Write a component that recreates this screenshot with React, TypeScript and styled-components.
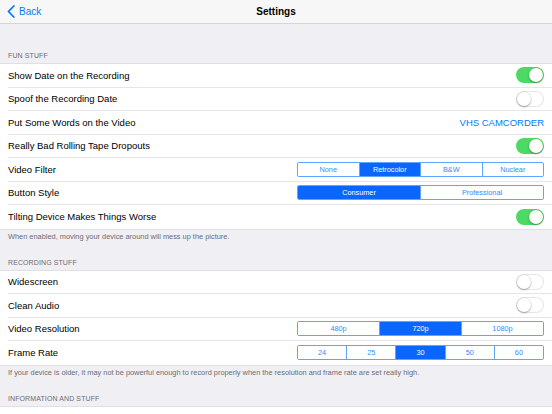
import styled, { createGlobalStyle } from "styled-components";

const GlobalStyle = createGlobalStyle`
  html, body {
    margin: 0;
    padding: 0;
    background: #efeff4;
    font-family: "Liberation Sans", Arial, sans-serif;
    -webkit-font-smoothing: antialiased;
  }
  * { box-sizing: border-box; }
`;

type Row =
  | { label: string; kind: "toggle"; on: boolean }
  | { label: string; kind: "value"; value: string }
  | { label: string; kind: "segments"; options: string[]; selected: number };

const sections: { title: string; footer?: string; rows: Row[] }[] = [
  {
    title: "Fun Stuff",
    footer: "When enabled, moving your device around will mess up the picture.",
    rows: [
      { label: "Show Date on the Recording", kind: "toggle", on: true },
      { label: "Spoof the Recording Date", kind: "toggle", on: false },
      { label: "Put Some Words on the Video", kind: "value", value: "VHS CAMCORDER" },
      { label: "Really Bad Rolling Tape Dropouts", kind: "toggle", on: true },
      { label: "Video Filter", kind: "segments", options: ["None", "Retrocolor", "B&W", "Nuclear"], selected: 1 },
      { label: "Button Style", kind: "segments", options: ["Consumer", "Professional"], selected: 0 },
      { label: "Tilting Device Makes Things Worse", kind: "toggle", on: true },
    ],
  },
  {
    title: "Recording Stuff",
    footer:
      "If your device is older, it may not be powerful enough to record properly when the resolution and frame rate are set really high.",
    rows: [
      { label: "Widescreen", kind: "toggle", on: false },
      { label: "Clean Audio", kind: "toggle", on: false },
      { label: "Video Resolution", kind: "segments", options: ["480p", "720p", "1080p"], selected: 1 },
      { label: "Frame Rate", kind: "segments", options: ["24", "25", "30", "50", "60"], selected: 2 },
    ],
  },
  {
    title: "Information and Stuff",
    rows: [{ label: "", kind: "value", value: "" }],
  },
];

export default function App() {
  return (
    <>
      <GlobalStyle />
      <Page>
        <NavBar>
          <BackButton>
            <svg width="8" height="13" viewBox="0 0 8 13">
              <path d="M6.8 1 1.5 6.5l5.3 5.5" fill="none" stroke="#007aff" strokeWidth="1.8" strokeLinecap="round" strokeLinejoin="round" />
            </svg>
            Back
          </BackButton>
          <NavTitle>Settings</NavTitle>
        </NavBar>

        {sections.map((section) => (
          <Section key={section.title}>
            <SectionHeader>{section.title}</SectionHeader>
            <Group>
              {section.rows.map((row, i) => (
                <Cell key={i}>
                  <Label>{row.label}</Label>
                  {row.kind === "toggle" && (
                    <Toggle $on={row.on}>
                      <Knob $on={row.on} />
                    </Toggle>
                  )}
                  {row.kind === "value" && <Value>{row.value}</Value>}
                  {row.kind === "segments" && (
                    <Segmented>
                      {row.options.map((opt, j) => (
                        <Segment key={opt} $active={j === row.selected}>
                          {opt}
                        </Segment>
                      ))}
                    </Segmented>
                  )}
                </Cell>
              ))}
            </Group>
            {section.footer && <SectionFooter>{section.footer}</SectionFooter>}
          </Section>
        ))}
      </Page>
    </>
  );
}

const Page = styled.div`
  width: 552px;
  height: 414px;
  overflow: hidden;
  background: #efeff4;
`;

const NavBar = styled.div`
  position: relative;
  height: 24px;
  background: #f7f7f7;
  border-bottom: 1px solid #d6d6da;
  display: flex;
  align-items: center;
  justify-content: center;
`;

const BackButton = styled.div`
  position: absolute;
  left: 7px;
  top: 0;
  height: 23px;
  display: flex;
  align-items: center;
  gap: 4px;
  color: #007aff;
  font-size: 10px;
`;

const NavTitle = styled.div`
  font-size: 10px;
  font-weight: 700;
  color: #000;
`;

const Section = styled.section`
  display: flex;
  flex-direction: column;

  &:first-of-type {
    margin-top: 10px;
  }
`;

const SectionHeader = styled.div`
  padding: 18px 8px 3px;
  font-size: 7px;
  line-height: 8px;
  text-transform: uppercase;
  color: #6d6d72;
  letter-spacing: 0.1px;
`;

const Group = styled.div`
  background: #fff;
  border-top: 1px solid #e0e0e4;
  border-bottom: 1px solid #e0e0e4;
`;

const Cell = styled.div`
  height: 23.5px;
  margin-left: 8px;
  padding-right: 8px;
  display: flex;
  align-items: center;
  justify-content: space-between;
  border-bottom: 1px solid #e6e6ea;

  &:last-child {
    border-bottom: none;
  }
`;

const Label = styled.span`
  font-size: 9.5px;
  color: #000;
`;

const Value = styled.span`
  font-size: 9.5px;
  color: #007aff;
`;

const Toggle = styled.div<{ $on: boolean }>`
  position: relative;
  width: 28px;
  height: 16px;
  border-radius: 8px;
  background: ${(p) => (p.$on ? "#4cd964" : "#fff")};
  box-shadow: ${(p) => (p.$on ? "none" : "inset 0 0 0 1px #e5e5ea")};
`;

const Knob = styled.div<{ $on: boolean }>`
  position: absolute;
  top: 1px;
  left: ${(p) => (p.$on ? "13px" : "1px")};
  width: 14px;
  height: 14px;
  border-radius: 50%;
  background: #fff;
  box-shadow: 0 1px 2px rgba(0, 0, 0, 0.3), 0 0 0 0.5px rgba(0, 0, 0, 0.1);
`;

const Segmented = styled.div`
  width: 247px;
  height: 15px;
  display: flex;
  border: 1px solid #5fa5ff;
  border-radius: 2px;
  overflow: hidden;
`;

const Segment = styled.div<{ $active: boolean }>`
  flex: 1;
  display: flex;
  align-items: center;
  justify-content: center;
  font-size: 7.3px;
  color: ${(p) => (p.$active ? "#fff" : "#2f8cff")};
  background: ${(p) => (p.$active ? "#0a66ff" : "#fff")};
  border-left: 1px solid #5fa5ff;

  &:first-child {
    border-left: none;
  }
`;

const SectionFooter = styled.div`
  padding: 2px 8px 0;
  font-size: 7.4px;
  line-height: 9px;
  color: #6d6d72;
`;
